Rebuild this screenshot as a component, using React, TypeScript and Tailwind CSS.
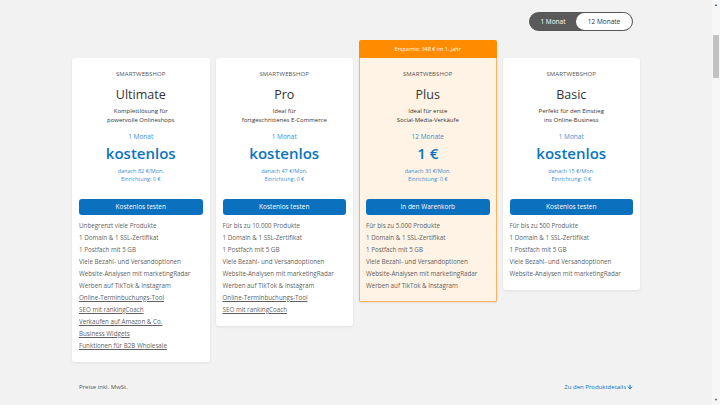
import { ArrowDown } from "lucide-react";

type Plan = {
    name: string;
    desc: [string, string];
    term: string;
    price: string;
    after: string;
    cta: string;
    features: string[];
    links: string[];
    highlight?: string;
};

const plans: Plan[] = [
    {
        name: "Ultimate",
        desc: ["Komplettlösung für", "powervolle Onlineshops"],
        term: "1 Monat",
        price: "kostenlos",
        after: "danach 82 €/Mon.",
        cta: "Kostenlos testen",
        features: [
            "Unbegrenzt viele Produkte",
            "1 Domain & 1 SSL-Zertifikat",
            "1 Postfach mit 5 GB",
            "Viele Bezahl- und Versandoptionen",
            "Website-Analysen mit marketingRadar",
            "Werben auf TikTok & Instagram",
        ],
        links: [
            "Online-Terminbuchungs-Tool",
            "SEO mit rankingCoach",
            "Verkaufen auf Amazon & Co.",
            "Business Widgets",
            "Funktionen für B2B Wholesale",
        ],
    },
    {
        name: "Pro",
        desc: ["Ideal für", "fortgeschrittenes E-Commerce"],
        term: "1 Monat",
        price: "kostenlos",
        after: "danach 47 €/Mon.",
        cta: "Kostenlos testen",
        features: [
            "Für bis zu 10.000 Produkte",
            "1 Domain & 1 SSL-Zertifikat",
            "1 Postfach mit 5 GB",
            "Viele Bezahl- und Versandoptionen",
            "Website-Analysen mit marketingRadar",
            "Werben auf TikTok & Instagram",
        ],
        links: ["Online-Terminbuchungs-Tool", "SEO mit rankingCoach"],
    },
    {
        name: "Plus",
        desc: ["Ideal für erste", "Social-Media-Verkäufe"],
        term: "12 Monate",
        price: "1 €",
        after: "danach 30 €/Mon.",
        cta: "In den Warenkorb",
        features: [
            "Für bis zu 5.000 Produkte",
            "1 Domain & 1 SSL-Zertifikat",
            "1 Postfach mit 5 GB",
            "Viele Bezahl- und Versandoptionen",
            "Website-Analysen mit marketingRadar",
            "Werben auf TikTok & Instagram",
        ],
        links: [],
        highlight: "Ersparnis: 348 € im 1. Jahr",
    },
    {
        name: "Basic",
        desc: ["Perfekt für den Einstieg", "ins Online-Business"],
        term: "1 Monat",
        price: "kostenlos",
        after: "danach 15 €/Mon.",
        cta: "Kostenlos testen",
        features: [
            "Für bis zu 500 Produkte",
            "1 Domain & 1 SSL-Zertifikat",
            "1 Postfach mit 5 GB",
            "Viele Bezahl- und Versandoptionen",
            "Website-Analysen mit marketingRadar",
        ],
        links: [],
    },
];

function PlanCard({ plan }: { plan: Plan }) {
    const hl = !!plan.highlight;
    return (
        <div className="flex flex-col">
            {/* savings banner */}
            <div className="flex h-[18px] items-center justify-center">
                {hl && (
                    <div className="flex h-full w-full items-center justify-center rounded-t-[2px] bg-[#ff8c00] text-[5.5px] text-white">
                        {plan.highlight}
                    </div>
                )}
            </div>
            <div
                className={
                    hl
                        ? "flex flex-col rounded-b-[2px] border-[1.5px] border-t-0 border-[#ffb05a] bg-[#fef3e5] px-[6px] pb-[9px] shadow-[0_1px_2px_rgba(0,0,0,0.08)]"
                        : "flex flex-col rounded-[3px] bg-white px-[7px] pb-[10px] shadow-[0_1px_3px_rgba(0,0,0,0.08)]"
                }
            >
                {/* Header */}
                <div className="mt-[12px] text-center text-[6px] tracking-[0.02em] text-[#555]">SMARTWEBSHOP</div>
                <div className="mt-[9px] text-center text-[12.5px] leading-[14px] text-[#333]">{plan.name}</div>
                <div className="mt-[5px] text-center text-[6px] leading-[9px] text-[#333]">
                    {plan.desc[0]}
                    <br />
                    {plan.desc[1]}
                </div>

                {/* Price */}
                <div className="mt-[7px] text-center text-[6.5px] text-[#3d8fd1]">{plan.term}</div>
                <div className="mt-[1px] text-center text-[15px] font-semibold leading-[20px] text-[#0a74c2]">{plan.price}</div>
                <div className="mt-[4px] text-center text-[5.5px] leading-[8px] text-[#3d8fd1]">
                    {plan.after}
                    <br />
                    Einrichtung: 0 €
                </div>

                <button
                    type="button"
                    className="mt-[16px] h-[16px] rounded-[3px] bg-[#0b70bd] text-[6.5px] text-white"
                >
                    {plan.cta}
                </button>

                {/* Features */}
                <ul className="mt-[5px] flex flex-col">
                    {plan.features.map((f) => (
                        <li key={f} className="h-[12px] whitespace-nowrap text-[6.25px] leading-[12px] text-[#5f5f5f]">
                            {f}
                        </li>
                    ))}
                    {plan.links.map((f) => (
                        <li key={f} className="h-[12px] whitespace-nowrap text-[6.25px] leading-[12px] text-[#5f5f5f] underline">
                            {f}
                        </li>
                    ))}
                </ul>
            </div>
        </div>
    );
}

export default function App() {
    return (
        <div
            className="flex h-[405px] w-[720px] overflow-hidden bg-[#f2f2f2]"
            style={{ fontFamily: '"Open Sans", Arial, sans-serif' }}
        >
            <div className="flex flex-1 flex-col items-center">
                <div className="flex w-[568px] flex-col">
                    {/* Term toggle */}
                    <div className="mt-[12px] flex justify-end pr-[7px]">
                        <div className="flex h-[19px] w-[104px] items-center rounded-full border-[1.5px] border-[#555] bg-[#5a5a5a]">
                            <div className="flex w-[46px] justify-center text-[6.5px] text-white">1 Monat</div>
                            <div className="flex h-full flex-1 items-center justify-center rounded-full bg-white text-[6.5px] text-[#333]">
                                12 Monate
                            </div>
                        </div>
                    </div>

                    {/* Plans */}
                    <div className="mt-[9px] grid grid-cols-4 items-start gap-[6px]">
                        {plans.map((p) => (
                            <PlanCard key={p.name} plan={p} />
                        ))}
                    </div>

                    {/* Footer */}
                    <div className="mt-[21px] flex items-center justify-between px-[7px]">
                        <span className="text-[6px] text-[#555]">Preise inkl. MwSt.</span>
                        <span className="flex items-center gap-[1px] text-[6px] text-[#0a74c2]">
                            Zu den Produktdetails
                            <ArrowDown className="h-[6px] w-[6px]" strokeWidth={4} />
                        </span>
                    </div>
                </div>
            </div>

            {/* Scrollbar */}
            <div className="flex w-[8px] flex-col bg-[#f7f7f7]">
                <div className="mt-[2px] flex justify-center text-[4px] text-[#555]">▲</div>
                <div className="mx-[1px] mt-[27px] h-[43px] rounded-[1px] bg-[#c1c1c1]" />
                <div className="flex-1" />
                <div className="mb-[2px] flex justify-center text-[4px] text-[#555]">▼</div>
            </div>
        </div>
    );
}
